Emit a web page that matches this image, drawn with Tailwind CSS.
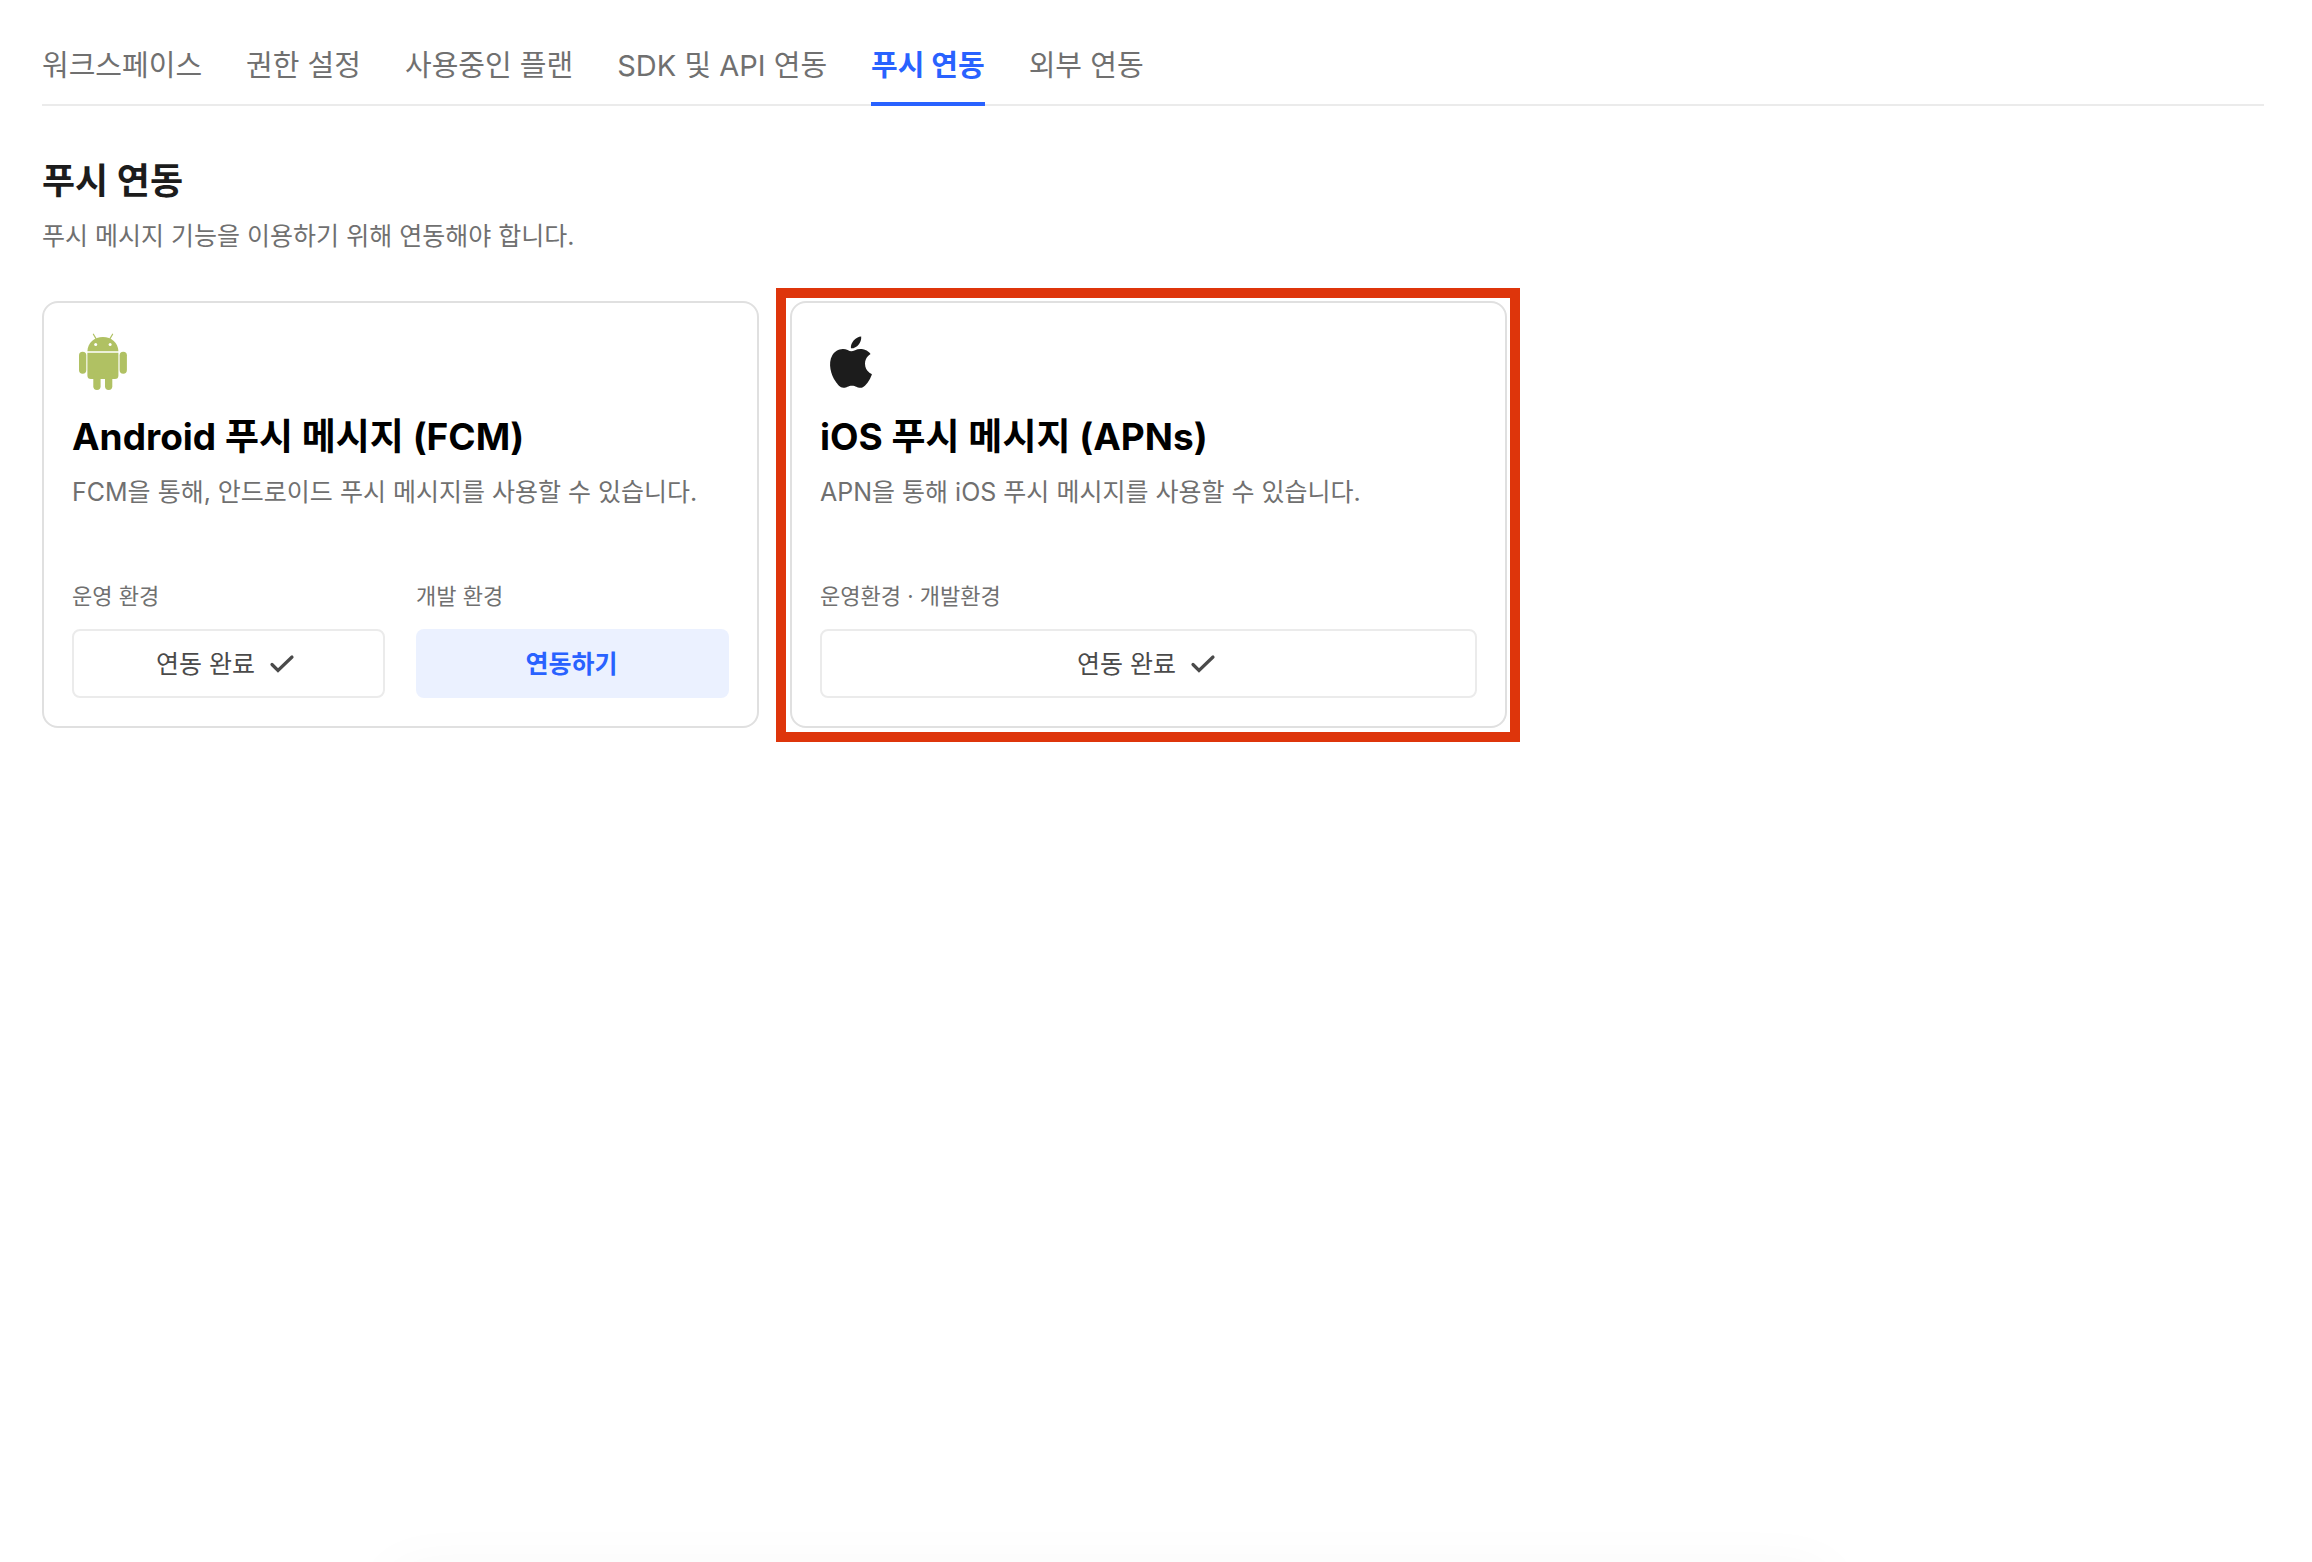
<!DOCTYPE html>
<html lang="ko">
<head>
<meta charset="utf-8">
<meta name="viewport" content="width=device-width, initial-scale=1">
<title>푸시 연동</title>
<script src="https://cdn.jsdelivr.net/npm/@tailwindcss/browser@4"></script>
</head>
<body class="min-h-screen overflow-x-hidden bg-white font-['Inter','Noto_Sans_CJK_KR',sans-serif] text-[#707070]">
<div class="pl-[42px] pr-12">
  <nav class="flex h-[106px] items-stretch gap-11 border-b-2 border-[#ebebeb] text-[29px] leading-10 whitespace-nowrap">
    <a href="#workspace" class="pt-[46px]">워크스페이스</a>
    <a href="#permission" class="pt-[46px]">권한 설정</a>
    <a href="#plan" class="pt-[46px]">사용중인 플랜</a>
    <a href="#sdk" class="pt-[46px]">SDK 및 API 연동</a>
    <a href="#push" aria-current="page" class="-mb-0.5 border-b-4 border-[#2962ff] pt-[46px] font-bold text-[#2962ff]">푸시 연동</a>
    <a href="#external" class="pt-[46px]">외부 연동</a>
  </nav>

  <main class="pt-[51px]">
    <h1 class="text-[36px] leading-12 font-bold text-[#1c1c1c]">푸시 연동</h1>
    <p class="mt-[13px] text-[25px] leading-9">푸시 메시지 기능을 이용하기 위해 연동해야 합니다.</p>

    <div class="mt-[47px] flex flex-wrap gap-[31px]">
      <section class="w-[717px] max-w-full rounded-2xl border-2 border-[#e0e0e0] p-7">
        <svg class="size-15" viewBox="0 0 60 60" fill="#b0c163" aria-hidden="true">
          <path d="M21.4 3.2 24 7.6M40.6 3.2 38 7.6" stroke="#b0c163" stroke-width="1.2" stroke-linecap="round"/>
          <path d="M15.4 20.2C15.6 11.8 22.4 6 30.9 6s15.3 5.8 15.5 14.2z"/>
          <circle cx="23.7" cy="13.4" r="1.5" fill="#fff"/>
          <circle cx="38.1" cy="13.4" r="1.5" fill="#fff"/>
          <path d="M15.4 21.7h31V44.5a3.5 3.5 0 0 1-3.5 3.5H18.9a3.5 3.5 0 0 1-3.5-3.5z"/>
          <rect x="7" y="20.7" width="7.3" height="22" rx="3.65"/>
          <rect x="47.6" y="20.7" width="7.3" height="22" rx="3.65"/>
          <rect x="21.3" y="40" width="7.3" height="19" rx="3.65"/>
          <rect x="33" y="40" width="7.3" height="19" rx="3.65"/>
        </svg>
        <h2 class="mt-[22px] text-[37px] leading-12 font-bold text-black">Android 푸시 메시지 (FCM)</h2>
        <p class="mt-[13px] text-[25px] leading-9">FCM을 통해, 안드로이드 푸시 메시지를 사용할 수 있습니다.</p>
        <div class="mt-[70px] grid grid-cols-2 gap-[31px]">
          <div>
            <p id="android-prod" class="text-[22px] leading-8">운영 환경</p>
            <button type="button" aria-describedby="android-prod" class="mt-[17px] flex h-[69px] w-full items-center justify-center gap-3 rounded-lg border-2 border-[#ebebeb] pt-0.5 pr-0.5 text-[25px] text-[#4a4a4a]">연동 완료
              <svg class="size-8" viewBox="0 0 32 32" fill="none" stroke="#4a4a4a" stroke-width="3.2" stroke-linecap="round" aria-hidden="true"><path d="m5 15.500 6 6L25 8"/></svg>
            </button>
          </div>
          <div>
            <p id="android-dev" class="text-[22px] leading-8">개발 환경</p>
            <button type="button" aria-describedby="android-dev" class="mt-[17px] h-[69px] w-full rounded-lg bg-[#ebf1ff] pt-0.5 pr-0.5 text-[25px] font-bold text-[#2962ff]">연동하기</button>
          </div>
        </div>
      </section>

      <section class="relative w-[717px] max-w-full rounded-2xl border-2 border-[#e0e0e0] p-7">
        <div class="pointer-events-none absolute -top-[15px] -right-[15px] -bottom-4 -left-4 border-10 border-[#de350b]"></div>
        <svg class="size-15" viewBox="0 0 60 60" fill="#1c1c1c" aria-hidden="true">
          <path transform="translate(5.3 5.5) scale(2.14)" d="M12.152 6.896c-.948 0-2.415-1.078-3.96-1.04-2.04.027-3.91 1.183-4.961 3.014-2.117 3.675-.546 9.103 1.519 12.09 1.013 1.454 2.208 3.09 3.792 3.039 1.52-.065 2.09-.987 3.935-.987 1.831 0 2.35.987 3.96.948 1.637-.026 2.676-1.48 3.676-2.948 1.156-1.688 1.636-3.325 1.662-3.415-.039-.013-3.182-1.221-3.22-4.857-.026-3.04 2.48-4.494 2.597-4.559-1.429-2.09-3.623-2.324-4.39-2.376-2-.156-3.675 1.09-4.61 1.09zM15.53 3.83c.843-1.012 1.4-2.427 1.245-3.83-1.207.052-2.662.805-3.532 1.818-.78.896-1.454 2.338-1.273 3.714 1.338.104 2.715-.688 3.559-1.701"/>
        </svg>
        <h2 class="mt-[22px] text-[37px] leading-12 font-bold text-black">iOS 푸시 메시지 (APNs)</h2>
        <p class="mt-[13px] text-[25px] leading-9">APN을 통해 iOS 푸시 메시지를 사용할 수 있습니다.</p>
        <div class="mt-[70px]">
          <p id="ios-env" class="text-[22px] leading-8">운영환경 · 개발환경</p>
          <button type="button" aria-describedby="ios-env" class="mt-[17px] flex h-[69px] w-full items-center justify-center gap-3 rounded-lg border-2 border-[#ebebeb] pt-0.5 text-[25px] text-[#4a4a4a]">연동 완료
            <svg class="size-8" viewBox="0 0 32 32" fill="none" stroke="#4a4a4a" stroke-width="3.2" stroke-linecap="round" aria-hidden="true"><path d="m5 15.500 6 6L25 8"/></svg>
          </button>
        </div>
      </section>
    </div>
  </main>
</div>
<div class="pointer-events-none fixed top-full right-[21%] left-[17%] h-20 shadow-[0_8px_60px_rgba(0,0,0,0.04)]"></div>
</body>
</html>
